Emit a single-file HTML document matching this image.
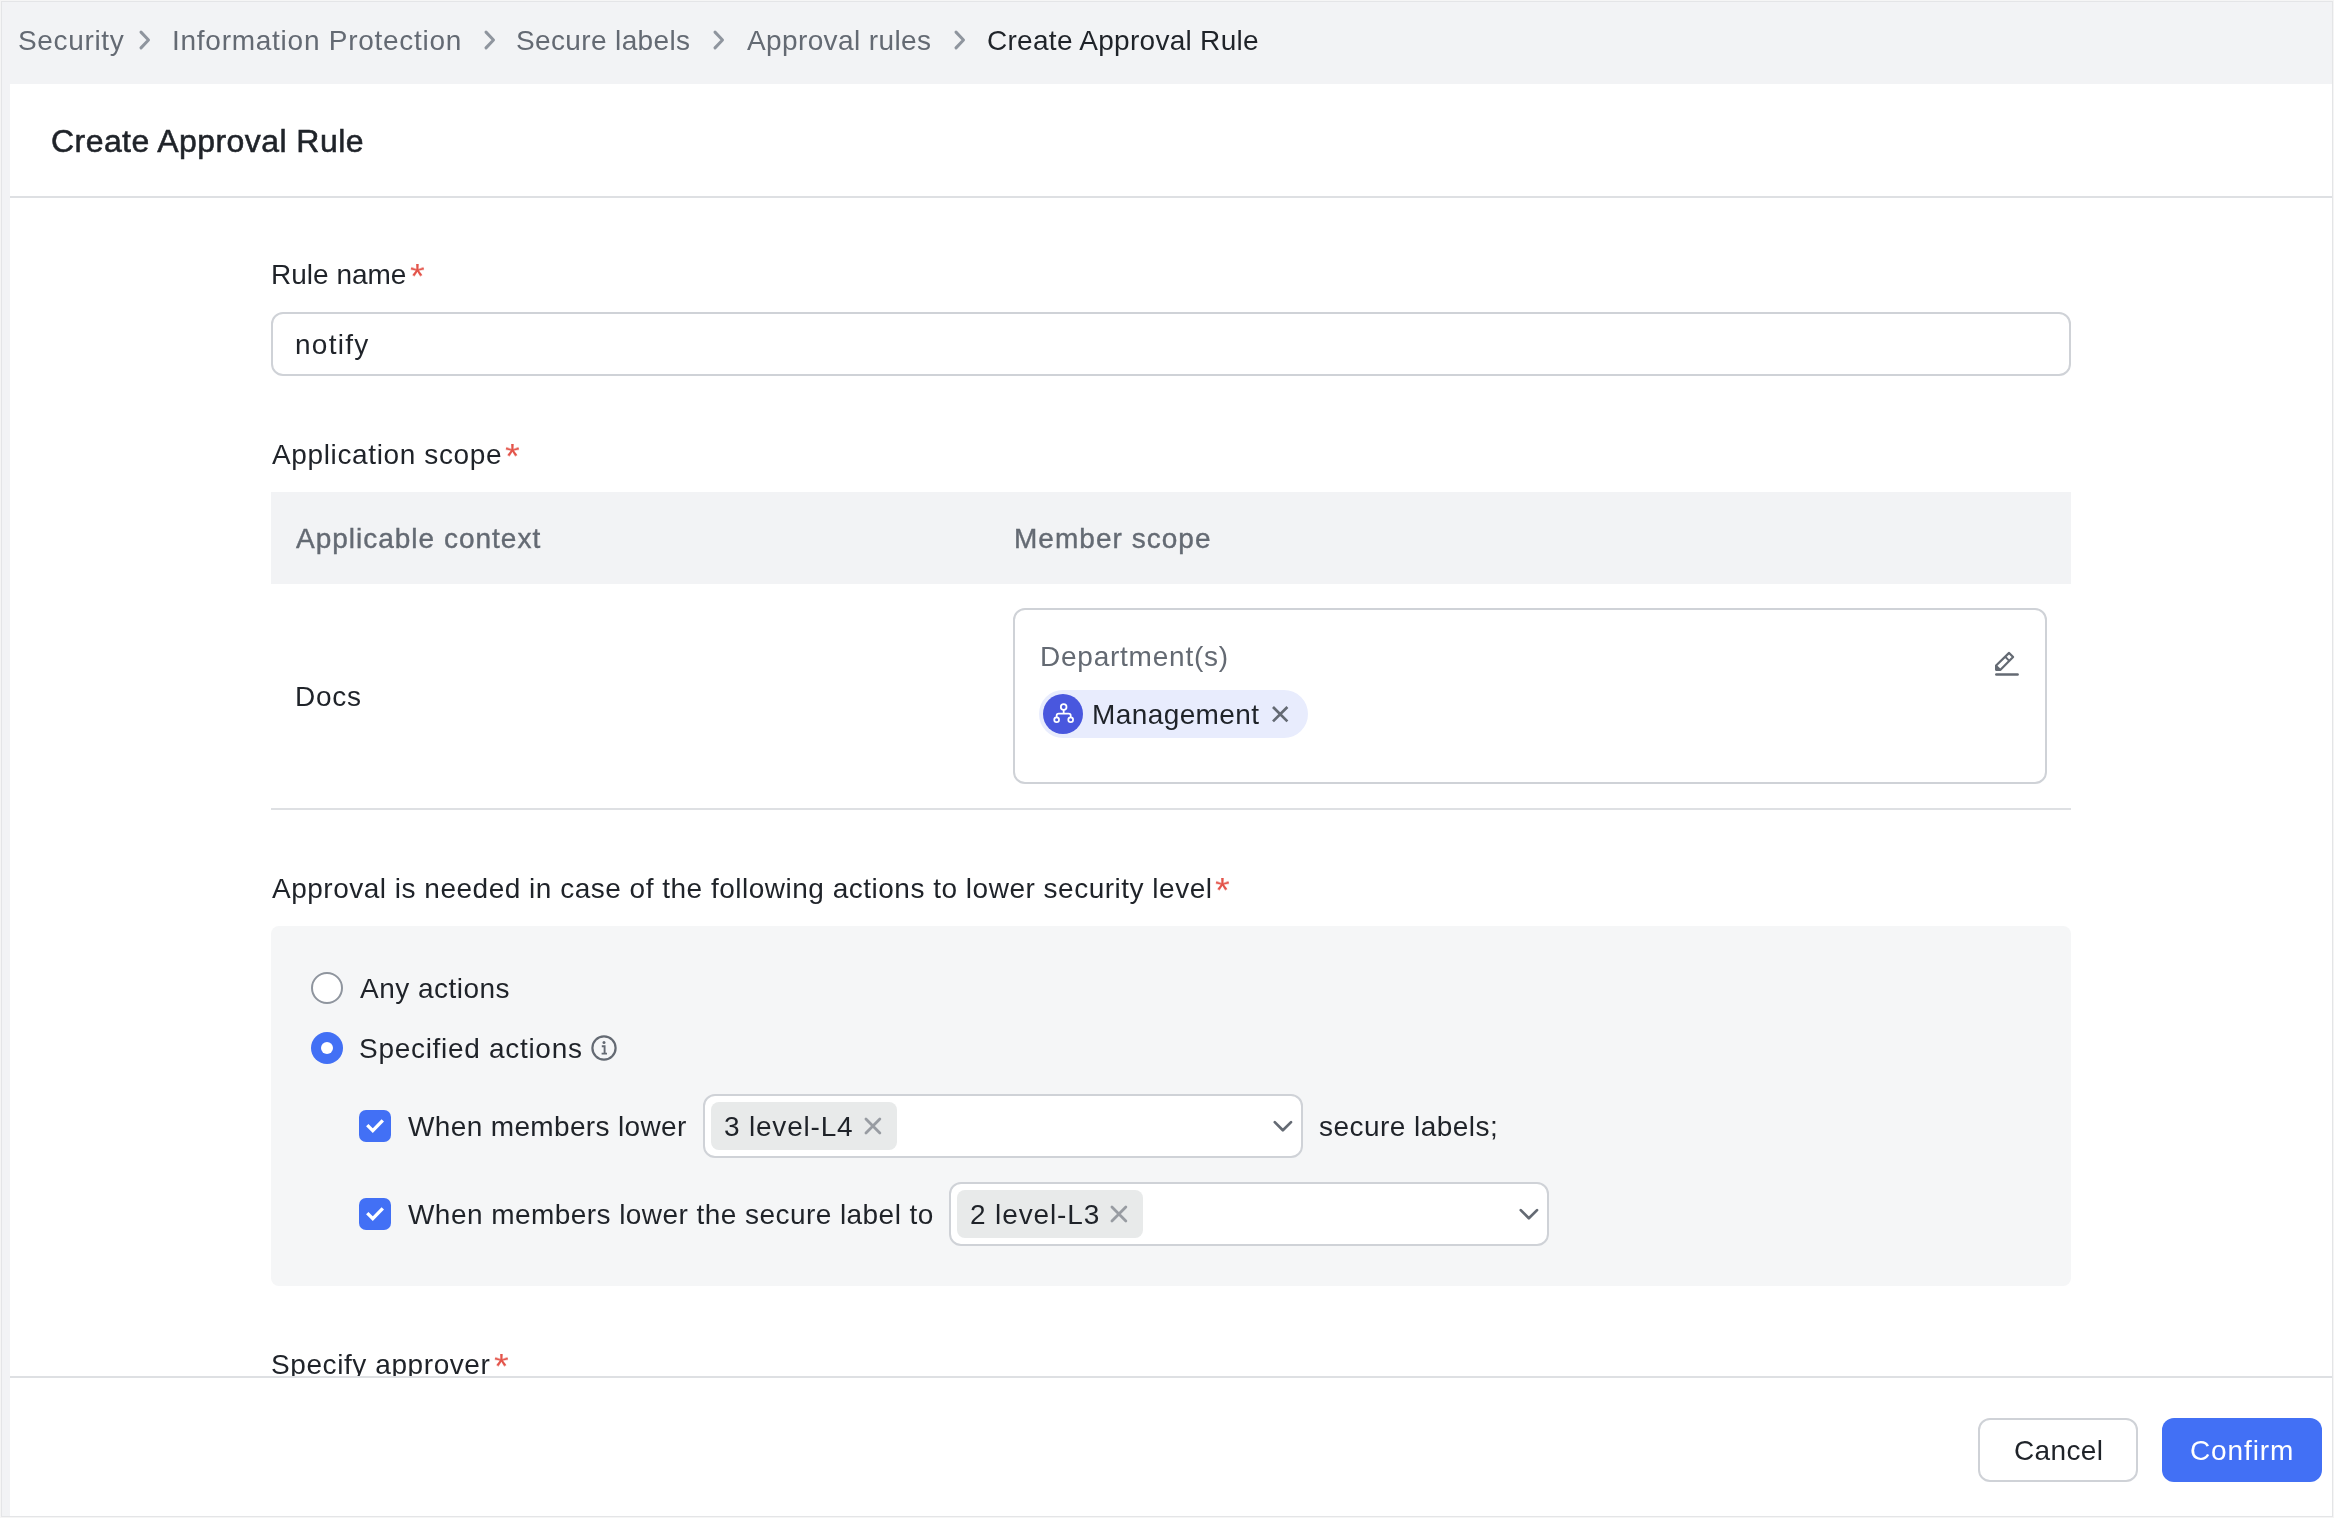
<!DOCTYPE html>
<html lang="en">
<head>
<meta charset="utf-8">
<title>Create Approval Rule</title>
<style>
html,body{margin:0;padding:0;}
body{width:2334px;height:1518px;position:relative;overflow:hidden;background:#f2f3f5;font-family:"Liberation Sans",sans-serif;}
.abs{position:absolute;box-sizing:border-box;}
.t{position:absolute;white-space:nowrap;line-height:1;font-family:"Liberation Sans",sans-serif;will-change:transform;}
svg{position:absolute;overflow:visible;}
</style>
</head>
<body>
<!-- outer frame -->
<div class="abs" style="left:0;top:0;width:2334px;height:1px;background:#f5f5f5;"></div>
<div class="abs" style="left:0;top:0;width:1px;height:1518px;background:#f5f5f5;"></div>
<div class="abs" style="left:1px;top:1px;width:2332px;height:1px;background:#e4e5e7;"></div>
<div class="abs" style="left:1px;top:1px;width:1px;height:1516px;background:#e4e5e7;"></div>
<!-- white panel -->
<div class="abs" id="panel" style="left:10px;top:84px;width:2322px;height:1432px;background:#fff;"></div>
<div class="abs" style="left:2332px;top:1px;width:1px;height:1516px;background:#e4e5e7;"></div>
<div class="abs" style="left:2333px;top:0;width:1px;height:1518px;background:#f5f5f5;"></div>
<div class="abs" style="left:1px;top:1516px;width:2332px;height:1px;background:#e4e5e7;"></div>
<div class="abs" style="left:0;top:1517px;width:2334px;height:1px;background:#f5f5f5;"></div>
<!-- header divider -->
<div class="abs" style="left:10px;top:196px;width:2322px;height:2px;background:#dee0e3;"></div>
<!-- breadcrumb chevrons -->
<svg style="left:138.5px;top:30px" width="12" height="20" viewBox="0 0 12 20"><path d="M2 2.1 L9.5 10 L2 17.9" fill="none" stroke="#8f959e" stroke-width="3" stroke-linecap="round" stroke-linejoin="round"/></svg>
<svg style="left:483.5px;top:30px" width="12" height="20" viewBox="0 0 12 20"><path d="M2 2.1 L9.5 10 L2 17.9" fill="none" stroke="#8f959e" stroke-width="3" stroke-linecap="round" stroke-linejoin="round"/></svg>
<svg style="left:712.5px;top:30px" width="12" height="20" viewBox="0 0 12 20"><path d="M2 2.1 L9.5 10 L2 17.9" fill="none" stroke="#8f959e" stroke-width="3" stroke-linecap="round" stroke-linejoin="round"/></svg>
<svg style="left:954px;top:30px" width="12" height="20" viewBox="0 0 12 20"><path d="M2 2.1 L9.5 10 L2 17.9" fill="none" stroke="#8f959e" stroke-width="3" stroke-linecap="round" stroke-linejoin="round"/></svg>
<!-- rule name input -->
<div class="abs" style="left:271px;top:312px;width:1800px;height:64px;border:2px solid #cfd2d7;border-radius:12px;background:#fff;"></div>
<!-- table -->
<div class="abs" style="left:271px;top:492px;width:1800px;height:92px;background:#f2f3f5;"></div>
<div class="abs" style="left:271px;top:808px;width:1800px;height:2px;background:#dee0e3;"></div>
<div class="abs" style="left:1013px;top:608px;width:1034px;height:176px;border:2px solid #cfd2d7;border-radius:12px;background:#fff;"></div>
<!-- chip -->
<div class="abs" style="left:1039px;top:690px;width:269px;height:48px;border-radius:24px;background:#e8ecfd;"></div>
<div class="abs" style="left:1043px;top:694px;width:40px;height:40px;border-radius:20px;background:#4957de;"></div>
<svg style="left:1043px;top:694px" width="40" height="40" viewBox="0 0 40 40"><g fill="none" stroke="#fff" stroke-width="1.75"><circle cx="20.67" cy="12.9" r="2.85"/><circle cx="13.65" cy="25.8" r="2.4"/><circle cx="27.7" cy="25.8" r="2.4"/><path d="M20.67 15.75 V19.56 M13.65 23.4 V21.56 Q13.65 19.56 15.65 19.56 H25.7 Q27.7 19.56 27.7 21.56 V23.4"/></g></svg>
<svg style="left:1272px;top:706.2px" width="17" height="17" viewBox="0 0 17 17"><path d="M1 1 L15.4 15.4 M15.4 1 L1 15.4" fill="none" stroke="#646a73" stroke-width="2.7"/></svg>
<!-- edit icon -->
<svg style="left:1994px;top:651px" width="26" height="26" viewBox="0 0 26 26"><g fill="none" stroke="#646a73" stroke-width="2.2" stroke-linejoin="round" stroke-linecap="round"><path d="M2.1 14.5 L15.1 1.9 L19.1 6.1 L6.5 18.85 H2.1 Z"/><path d="M2.1 14.5 L2.7 13.9 L7.1 18.25 L6.5 18.85 H2.1 Z" fill="#646a73" stroke="none"/><path d="M11.25 5.75 L15.25 9.95" stroke-width="1.9" stroke-linecap="butt"/><path d="M2.3 23.5 H23.6" stroke-width="2.5"/></g></svg>
<!-- gray panel -->
<div class="abs" style="left:271px;top:926px;width:1800px;height:360px;border-radius:8px;background:#f5f6f7;"></div>
<!-- radios -->
<div class="abs" style="left:311px;top:972px;width:32px;height:32px;border-radius:16px;border:2px solid #8f959e;background:#fff;"></div>
<div class="abs" style="left:311px;top:1032px;width:32px;height:32px;border-radius:16px;background:#4270f5;"></div>
<div class="abs" style="left:321px;top:1042px;width:12px;height:12px;border-radius:6px;background:#fff;"></div>
<!-- info icon -->
<svg style="left:591px;top:1035px" width="26" height="26" viewBox="0 0 26 26"><circle cx="13" cy="13" r="11.6" fill="none" stroke="#646a73" stroke-width="2.2"/><circle cx="13" cy="7.6" r="1.5" fill="#646a73"/><path d="M10.8 11.2 H13.6 V18.4 M10.6 18.6 H16" fill="none" stroke="#646a73" stroke-width="1.9"/></svg>
<!-- checkboxes -->
<div class="abs" style="left:359px;top:1110px;width:32px;height:32px;border-radius:7px;background:#4270f5;"></div>
<svg style="left:359px;top:1110px" width="32" height="32" viewBox="0 0 32 32"><path d="M8.26 15.18 L13.77 20.7 L23.8 10.44" fill="none" stroke="#fff" stroke-width="3.35" stroke-linecap="butt" stroke-linejoin="miter"/></svg>
<div class="abs" style="left:359px;top:1198px;width:32px;height:32px;border-radius:7px;background:#4270f5;"></div>
<svg style="left:359px;top:1198px" width="32" height="32" viewBox="0 0 32 32"><path d="M8.26 15.18 L13.77 20.7 L23.8 10.44" fill="none" stroke="#fff" stroke-width="3.35" stroke-linecap="butt" stroke-linejoin="miter"/></svg>
<!-- selects -->
<div class="abs" style="left:703px;top:1094px;width:600px;height:64px;border:2px solid #cfd2d7;border-radius:12px;background:#fff;"></div>
<div class="abs" style="left:711px;top:1102px;width:186px;height:48px;border-radius:8px;background:#e8eaea;"></div>
<svg style="left:864px;top:1117px" width="18" height="18" viewBox="0 0 18 18"><path d="M1.95 2.05 L15.85 15.95 M15.85 2.05 L1.95 15.95" fill="none" stroke="#989ca2" stroke-width="2.8" stroke-linecap="round"/></svg>
<svg style="left:1273px;top:1119px" width="20" height="14" viewBox="0 0 20 14"><path d="M1.75 3.1 L9.85 11.25 L18.05 3.1" fill="none" stroke="#646a73" stroke-width="2.7" stroke-linecap="round" stroke-linejoin="round"/></svg>
<div class="abs" style="left:949px;top:1182px;width:600px;height:64px;border:2px solid #cfd2d7;border-radius:12px;background:#fff;"></div>
<div class="abs" style="left:957px;top:1190px;width:186px;height:48px;border-radius:8px;background:#e8eaea;"></div>
<svg style="left:1110px;top:1205px" width="18" height="18" viewBox="0 0 18 18"><path d="M1.95 2.05 L15.85 15.95 M15.85 2.05 L1.95 15.95" fill="none" stroke="#989ca2" stroke-width="2.8" stroke-linecap="round"/></svg>
<svg style="left:1519px;top:1207px" width="20" height="14" viewBox="0 0 20 14"><path d="M1.75 3.1 L9.85 11.25 L18.05 3.1" fill="none" stroke="#646a73" stroke-width="2.7" stroke-linecap="round" stroke-linejoin="round"/></svg>
<span class="t" id="bc1" style="left:18px;top:27.00px;font-size:28px;color:#646a73;letter-spacing:0.647px;">Security</span>
<span class="t" id="bc2" style="left:172px;top:27.00px;font-size:28px;color:#646a73;letter-spacing:0.739px;">Information Protection</span>
<span class="t" id="bc3" style="left:516px;top:27.00px;font-size:28px;color:#646a73;letter-spacing:0.365px;">Secure labels</span>
<span class="t" id="bc4" style="left:747px;top:27.00px;font-size:28px;color:#646a73;letter-spacing:0.381px;">Approval rules</span>
<span class="t" id="bc5" style="left:987px;top:27.00px;font-size:28px;color:#1f2329;letter-spacing:0.285px;">Create Approval Rule</span>
<span class="t" id="title" style="left:51px;top:125.00px;font-size:32px;color:#1f2329;letter-spacing:0.438px;-webkit-text-stroke:0.55px #1f2329;">Create Approval Rule</span>
<span class="t" id="l1" style="left:271px;top:261.00px;font-size:28px;color:#1f2329;letter-spacing:0.005px;">Rule name</span>
<span class="t" id="a1" style="left:406px;top:263.00px;font-size:38px;color:#e3544a;letter-spacing:0.000px;font-family:'Liberation Mono',monospace;transform:scaleY(0.9);transform-origin:0 0;">*</span>
<span class="t" id="notify" style="left:295px;top:331.00px;font-size:28px;color:#1f2329;letter-spacing:1.272px;">notify</span>
<span class="t" id="l2" style="left:272px;top:441.00px;font-size:28px;color:#1f2329;letter-spacing:0.633px;">Application scope</span>
<span class="t" id="a2" style="left:501px;top:443.00px;font-size:38px;color:#e3544a;letter-spacing:0.000px;font-family:'Liberation Mono',monospace;transform:scaleY(0.9);transform-origin:0 0;">*</span>
<span class="t" id="th1" style="left:296px;top:525.00px;font-size:28px;color:#646a73;letter-spacing:0.995px;-webkit-text-stroke:0.4px #646a73;">Applicable context</span>
<span class="t" id="th2" style="left:1014px;top:525.00px;font-size:28px;color:#646a73;letter-spacing:1.026px;-webkit-text-stroke:0.4px #646a73;">Member scope</span>
<span class="t" id="docs" style="left:295px;top:683.00px;font-size:28px;color:#1f2329;letter-spacing:0.756px;">Docs</span>
<span class="t" id="dept" style="left:1040px;top:643.00px;font-size:28px;color:#646a73;letter-spacing:0.763px;">Department(s)</span>
<span class="t" id="mgmt" style="left:1092px;top:701.00px;font-size:28px;color:#1f2329;letter-spacing:0.406px;">Management</span>
<span class="t" id="l3" style="left:272px;top:875.00px;font-size:28px;color:#1f2329;letter-spacing:0.503px;">Approval is needed in case of the following actions to lower security level</span>
<span class="t" id="a3" style="left:1211px;top:877.00px;font-size:38px;color:#e3544a;letter-spacing:0.000px;font-family:'Liberation Mono',monospace;transform:scaleY(0.9);transform-origin:0 0;">*</span>
<span class="t" id="r1" style="left:360px;top:975.00px;font-size:28px;color:#1f2329;letter-spacing:0.475px;">Any actions</span>
<span class="t" id="r2" style="left:359px;top:1035.00px;font-size:28px;color:#1f2329;letter-spacing:0.702px;">Specified actions</span>
<span class="t" id="c1" style="left:408px;top:1113.00px;font-size:28px;color:#1f2329;letter-spacing:0.356px;">When members lower</span>
<span class="t" id="tg1" style="left:724px;top:1113.00px;font-size:28px;color:#1f2329;letter-spacing:0.803px;">3 level-L4</span>
<span class="t" id="sl" style="left:1319px;top:1113.00px;font-size:28px;color:#1f2329;letter-spacing:0.464px;">secure labels;</span>
<span class="t" id="c2" style="left:408px;top:1201.00px;font-size:28px;color:#1f2329;letter-spacing:0.444px;">When members lower the secure label to</span>
<span class="t" id="tg2" style="left:970px;top:1201.00px;font-size:28px;color:#1f2329;letter-spacing:0.882px;">2 level-L3</span>
<span class="t" id="l4" style="left:271px;top:1351.00px;font-size:28px;color:#1f2329;letter-spacing:0.583px;">Specify approver</span>
<span class="t" id="a4" style="left:490px;top:1353.00px;font-size:38px;color:#e3544a;letter-spacing:0.000px;font-family:'Liberation Mono',monospace;transform:scaleY(0.9);transform-origin:0 0;">*</span>
<span class="t" id="cancel" style="left:2014px;top:1437.00px;font-size:28px;color:#1f2329;letter-spacing:0.340px;z-index:10;">Cancel</span>
<span class="t" id="confirm" style="left:2190px;top:1437.00px;font-size:28px;color:#ffffff;letter-spacing:0.890px;z-index:10;">Confirm</span>
<!-- footer -->
<div class="abs" style="z-index:5;left:10px;top:1376px;width:2322px;height:140px;background:#fff;"></div>
<div class="abs" style="z-index:5;left:10px;top:1376px;width:2322px;height:2px;background:#dee0e3;"></div>
<div class="abs" style="z-index:5;left:1978px;top:1418px;width:160px;height:64px;border:2px solid #cfd2d7;border-radius:12px;background:#fff;"></div>
<div class="abs" style="z-index:5;left:2162px;top:1418px;width:160px;height:64px;border-radius:12px;background:#4270f5;"></div>
</body>
</html>
